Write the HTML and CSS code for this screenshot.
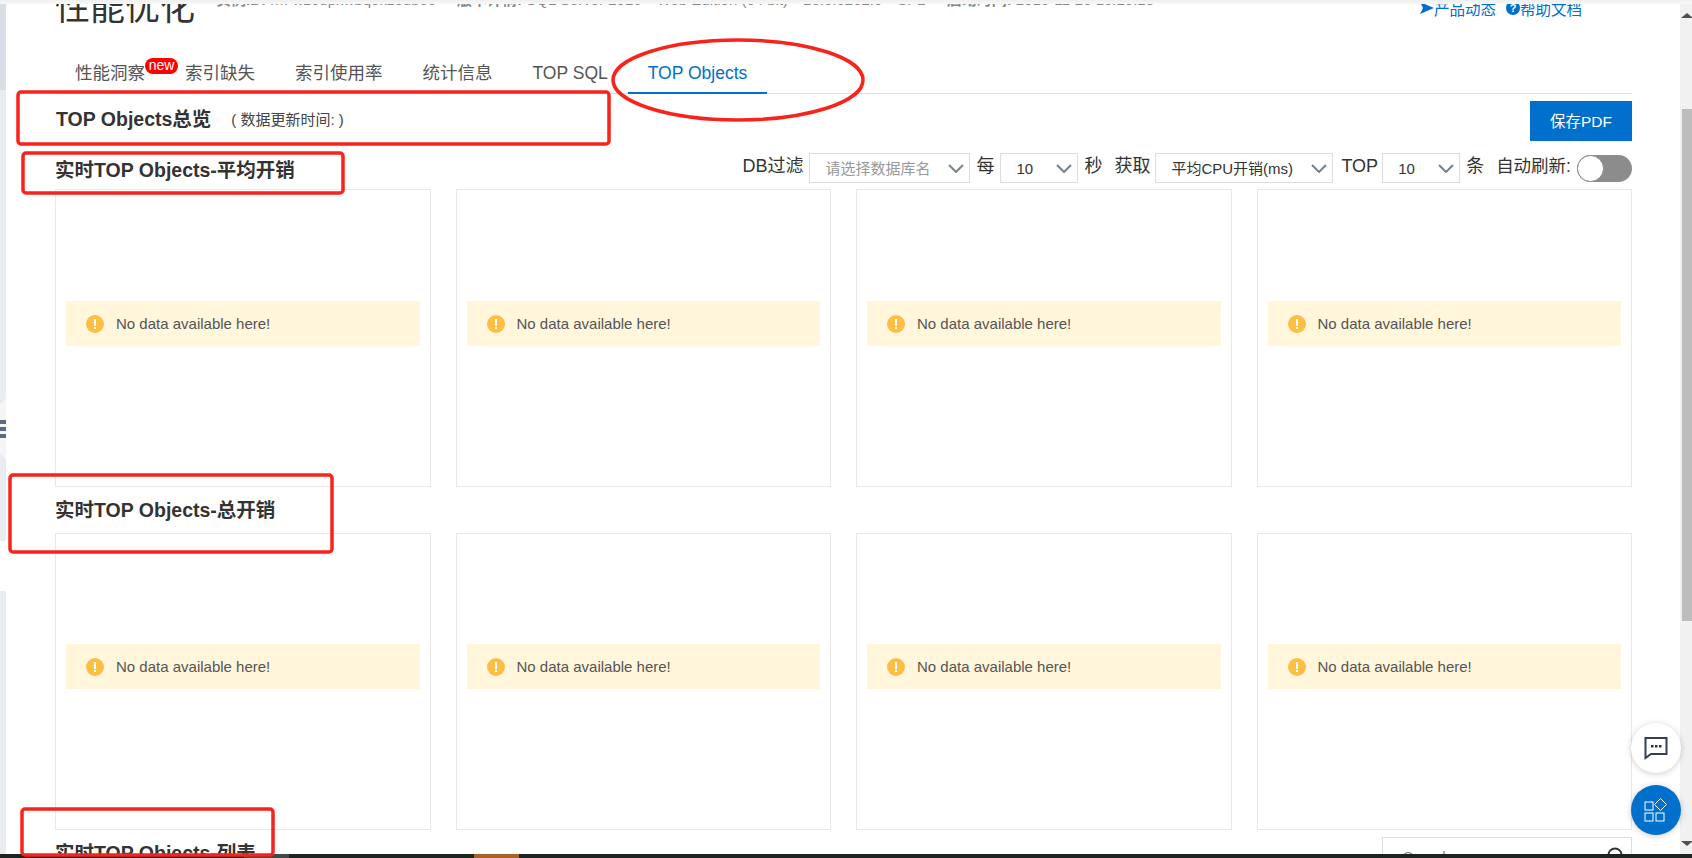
FILE: index.html
```html
<!DOCTYPE html>
<html lang="zh-CN">
<head>
  <meta charset="UTF-8" />
  <title>性能优化 - TOP Objects</title>
  <link rel="stylesheet" href="styles.css">
</head>
<body>
  <div class="screen">
    <div class="top-fade"></div>

    <div class="workspace">
      <!-- Sidebar edge -->
      <div class="side-strip">
        <div class="strip-dark"></div>
        <div class="strip-light"></div>
        <div class="strip-gap"></div>
        <div class="strip-light strip-rest"></div>
        <div class="collapse">
          <span></span><span></span><span></span>
        </div>
      </div>

      <div class="main">
        <div class="page-head">
          <h1>性能优化</h1>
          <div class="meta">
            <span class="meta-item"><b>实例ID:</b> rm-wz6dpxwbq0kz3db00</span>
            <span class="meta-item meta-wide"><b>版本详情:</b> SQL Server 2016</span>
            <span class="meta-item">Web Edition (64 bit)</span>
            <span class="meta-item">13.0.6202.0</span>
            <span class="meta-item">SP2</span>
            <span class="meta-item meta-wide"><b>启动时间:</b> 2019-11-20 10:20:18</span>
          </div>
          <div class="head-links">
            <a class="head-link">
              <svg width="14" height="14" viewBox="0 0 14 14"><path d="M0 1l14 6-14 6 3-6z" fill="#0070cc"/></svg>产品动态
            </a>
            <a class="head-link">
              <svg width="14" height="14" viewBox="0 0 14 14"><circle cx="7" cy="7" r="7" fill="#0070cc"/><text x="7" y="11" class="help-mark">?</text></svg>帮助文档
            </a>
          </div>
        </div>

        <!-- Tabs -->
        <div class="tabs">
          <div class="tab">性能洞察<span class="badge">new</span></div>
          <div class="tab">索引缺失</div>
          <div class="tab">索引使用率</div>
          <div class="tab">统计信息</div>
          <div class="tab">TOP SQL</div>
          <div class="tab active">TOP Objects</div>
        </div>

        <div class="overview">
          <div class="overview-title">
            <h2>TOP Objects总览</h2>
            <span class="update-time">( 数据更新时间: )</span>
          </div>
          <button class="save-btn">保存PDF</button>
        </div>

        <!-- Average cost -->
        <div class="filter-row">
          <h2 class="filter-title">实时TOP Objects-平均开销</h2>
          <div class="filters">
            <span class="lbl">DB过滤</span>
            <div class="select w-db ml6"><span class="placeholder">请选择数据库名</span><svg class="chev" width="16" height="9" viewBox="0 0 16 9"><path d="M1 1l7 7 7-7" fill="none" stroke="#76828f" stroke-width="2"/></svg></div>
            <span class="lbl ml6">每</span>
            <div class="select w-num ml6"><span>10</span><svg class="chev" width="16" height="9" viewBox="0 0 16 9"><path d="M1 1l7 7 7-7" fill="none" stroke="#76828f" stroke-width="2"/></svg></div>
            <span class="lbl ml6">秒</span>
            <span class="lbl ml12">获取</span>
            <div class="select w-metric ml5"><span>平均CPU开销(ms)</span><svg class="chev" width="16" height="9" viewBox="0 0 16 9"><path d="M1 1l7 7 7-7" fill="none" stroke="#76828f" stroke-width="2"/></svg></div>
            <span class="lbl ml8">TOP</span>
            <div class="select w-num ml4"><span>10</span><svg class="chev" width="16" height="9" viewBox="0 0 16 9"><path d="M1 1l7 7 7-7" fill="none" stroke="#76828f" stroke-width="2"/></svg></div>
            <span class="lbl ml6">条</span>
            <span class="lbl lbl-auto ml12">自动刷新:</span>
            <div class="toggle ml6"><span class="knob"></span></div>
          </div>
        </div>

        <div class="chart-grid chart-grid-first">
          <div class="chart-card"><div class="alert"><svg class="warn" width="18" height="18" viewBox="0 0 18 18"><circle cx="9" cy="9" r="9" fill="#fcbf45"/><rect x="8" y="4" width="2" height="7" fill="#fff"/><rect x="8" y="12" width="2" height="2" fill="#fff"/></svg>No data available here!</div></div>
          <div class="chart-card"><div class="alert"><svg class="warn" width="18" height="18" viewBox="0 0 18 18"><circle cx="9" cy="9" r="9" fill="#fcbf45"/><rect x="8" y="4" width="2" height="7" fill="#fff"/><rect x="8" y="12" width="2" height="2" fill="#fff"/></svg>No data available here!</div></div>
          <div class="chart-card"><div class="alert"><svg class="warn" width="18" height="18" viewBox="0 0 18 18"><circle cx="9" cy="9" r="9" fill="#fcbf45"/><rect x="8" y="4" width="2" height="7" fill="#fff"/><rect x="8" y="12" width="2" height="2" fill="#fff"/></svg>No data available here!</div></div>
          <div class="chart-card"><div class="alert"><svg class="warn" width="18" height="18" viewBox="0 0 18 18"><circle cx="9" cy="9" r="9" fill="#fcbf45"/><rect x="8" y="4" width="2" height="7" fill="#fff"/><rect x="8" y="12" width="2" height="2" fill="#fff"/></svg>No data available here!</div></div>
        </div>

        <!-- Total cost -->
        <div class="section-row">
          <h2>实时TOP Objects-总开销</h2>
        </div>

        <div class="chart-grid">
          <div class="chart-card"><div class="alert"><svg class="warn" width="18" height="18" viewBox="0 0 18 18"><circle cx="9" cy="9" r="9" fill="#fcbf45"/><rect x="8" y="4" width="2" height="7" fill="#fff"/><rect x="8" y="12" width="2" height="2" fill="#fff"/></svg>No data available here!</div></div>
          <div class="chart-card"><div class="alert"><svg class="warn" width="18" height="18" viewBox="0 0 18 18"><circle cx="9" cy="9" r="9" fill="#fcbf45"/><rect x="8" y="4" width="2" height="7" fill="#fff"/><rect x="8" y="12" width="2" height="2" fill="#fff"/></svg>No data available here!</div></div>
          <div class="chart-card"><div class="alert"><svg class="warn" width="18" height="18" viewBox="0 0 18 18"><circle cx="9" cy="9" r="9" fill="#fcbf45"/><rect x="8" y="4" width="2" height="7" fill="#fff"/><rect x="8" y="12" width="2" height="2" fill="#fff"/></svg>No data available here!</div></div>
          <div class="chart-card"><div class="alert"><svg class="warn" width="18" height="18" viewBox="0 0 18 18"><circle cx="9" cy="9" r="9" fill="#fcbf45"/><rect x="8" y="4" width="2" height="7" fill="#fff"/><rect x="8" y="12" width="2" height="2" fill="#fff"/></svg>No data available here!</div></div>
        </div>

        <!-- List -->
        <div class="section-row">
          <h2>实时TOP Objects-列表</h2>
          <div class="search">
            <span>Search</span>
            <svg width="18" height="18" viewBox="0 0 18 18"><circle cx="8" cy="8" r="6.5" fill="none" stroke="#333" stroke-width="2"/><path d="M13 13l4 4" stroke="#333" stroke-width="2"/></svg>
          </div>
        </div>
      </div>

      <div class="scrollbar">
        <span class="arrow-up"></span>
        <div class="thumb"></div>
        <span class="arrow-down"></span>
      </div>
    </div>

    <div class="taskbar">
      <span class="task-item"></span>
      <span class="task-item task-orange"></span>
    </div>

    <!-- Floating buttons -->
    <div class="float-btn chat-btn">
      <svg width="24" height="24" viewBox="0 0 24 24"><path d="M1.5 2h21v16H7l-5.500 4z" fill="none" stroke="#333f50" stroke-width="2"/><rect x="7" y="9" width="2.500" height="2.500" fill="#333"/><rect x="11" y="9" width="2.500" height="2.500" fill="#333"/><rect x="15" y="9" width="2.500" height="2.500" fill="#333"/></svg>
    </div>
    <div class="float-btn apps-btn">
      <svg width="24" height="24" viewBox="0 0 24 24"><rect x="1" y="4" width="8" height="8" fill="none" stroke="#fff"/><rect x="1" y="15" width="8" height="8" fill="none" stroke="#fff"/><rect x="12" y="15" width="8" height="8" fill="none" stroke="#fff"/><path d="M16.500 0.500l6 6-6 6-6-6z" fill="none" stroke="#fff"/></svg>
    </div>

    <!-- Red marks drawn on the screenshot -->
    <svg class="marks" width="1692" height="858" viewBox="0 0 1692 858">
      <rect x="18" y="92" width="591" height="52" rx="3"/>
      <rect x="23" y="153" width="320" height="40" rx="3"/>
      <rect x="10" y="475" width="322" height="77" rx="3"/>
      <rect x="22" y="809" width="251" height="46" rx="3"/>
      <ellipse cx="738" cy="80" rx="125" ry="40"/>
    </svg>
  </div>
</body>
</html>
```

FILE: styles.css
```css
* {
  box-sizing: border-box;
}

body {
  margin: 0;
  font-family: "Liberation Sans", "Noto Sans CJK SC", sans-serif;
  color: #333;
  background: #fff;
}

h1, h2 {
  margin: 0;
}

.screen {
  position: relative;
  display: flex;
  flex-direction: column;
  width: 1692px;
  height: 858px;
  overflow: hidden;
}

.top-fade {
  height: 4px;
  background: linear-gradient(#efefef, #f8f8f8);
}

.workspace {
  display: flex;
  flex: 1;
  min-height: 0;
}

/* sidebar edge */
.side-strip {
  position: relative;
  display: flex;
  flex-direction: column;
  width: 6px;
}

.strip-dark {
  height: 86px;
  background: #d9dde5;
}

.strip-light {
  height: 451px;
  background: #e9ecf1;
}

.strip-gap {
  height: 50px;
}

.strip-rest {
  flex: 1;
}

.collapse {
  position: absolute;
  top: 394px;
  left: 0;
  width: 6px;
  height: 62px;
  padding-top: 22px;
  background: #f5f5f7;
  clip-path: polygon(0 10%, 100% 0, 100% 100%, 0 90%);
}

.collapse span {
  display: block;
  height: 4px;
  margin-bottom: 3px;
  background: #5d6b80;
}

/* main column */
.main {
  flex: 1;
  min-width: 0;
  padding: 0 48px 0 49px;
  overflow: hidden;
}

.page-head {
  display: flex;
  height: 48px;
  margin-top: -20px;
}

.page-head h1 {
  font-size: 35px;
  font-weight: 400;
  line-height: 48px;
  color: #333;
}

.meta {
  display: flex;
  gap: 15px;
  margin-left: 21px;
  font-size: 15px;
  line-height: 32px;
  color: #888;
  white-space: nowrap;
}

.meta-wide {
  margin-left: 6px;
}

.head-links {
  display: flex;
  gap: 10px;
  margin-left: auto;
  margin-right: 50px;
}

.head-link {
  display: flex;
  align-items: center;
  font-size: 15.5px;
  color: #0070cc;
}

.help-mark {
  font-size: 11px;
  font-weight: bold;
  text-anchor: middle;
  fill: #fff;
}

/* tabs */
.tabs {
  display: flex;
  margin-top: 20px;
  border-bottom: 1px solid #e0e0e0;
}

.tab {
  position: relative;
  height: 42px;
  margin-bottom: -1px;
  padding: 0 20px;
  font-size: 17.5px;
  line-height: 42px;
  color: #555;
  border-bottom: 2px solid transparent;
}

.tab.active {
  color: #0070cc;
  border-bottom-color: #0070cc;
}

.badge {
  position: absolute;
  top: 6px;
  left: 90px;
  width: 33px;
  height: 16px;
  font-size: 14px;
  line-height: 15px;
  text-align: center;
  color: #fff;
  background: #f00;
  border-radius: 8px;
}

/* overview row */
.overview {
  display: flex;
  align-items: center;
  justify-content: space-between;
  margin-top: 7px;
  padding-left: 1px;
}

.overview-title {
  display: flex;
  align-items: center;
  margin-bottom: 5px;
}

.overview h2,
.filter-title,
.section-row h2 {
  font-size: 19.5px;
  color: #333;
}

.overview h2 {
  margin-bottom: 2px;
}

.update-time {
  margin-left: 20px;
  font-size: 15px;
  color: #444;
}

.save-btn {
  width: 102px;
  height: 40px;
  padding: 0 0 2px;
  font-family: inherit;
  font-size: 15.5px;
  color: #fff;
  background: #0070cc;
  border: none;
}

/* filter row */
.filter-row {
  display: flex;
  justify-content: space-between;
  margin-top: 12px;
  margin-bottom: 6px;
}

.filter-title {
  margin-top: 4px;
  line-height: 26px;
}

.filters {
  display: flex;
  align-items: flex-start;
}

.lbl {
  font-size: 18px;
  line-height: 26px;
  color: #333;
}

.lbl-auto {
  font-size: 17.5px;
}

.ml4 { margin-left: 4px; }
.ml5 { margin-left: 5px; }
.ml6 { margin-left: 6px; }
.ml8 { margin-left: 8px; }
.ml12 { margin-left: 12px; }

.select {
  position: relative;
  height: 30px;
  padding-left: 15px;
  font-size: 15px;
  line-height: 30px;
  color: #333;
  background: #fff;
  border: 1px solid #ddd;
}

.w-db { width: 161px; }
.w-num { width: 78px; }
.w-metric { width: 178px; }

.placeholder {
  color: #999;
}

.chev {
  position: absolute;
  top: 10px;
  right: 5px;
}

.toggle {
  display: flex;
  align-items: center;
  width: 55px;
  height: 27px;
  margin-top: 2px;
  background: #8c8c8c;
  border-radius: 14px;
}

.knob {
  width: 27px;
  height: 27px;
  background: #fff;
  border: 1px solid #8c8c8c;
  border-radius: 50%;
}

/* chart cards */
.chart-grid {
  display: grid;
  grid-template-columns: repeat(4, 1fr);
  gap: 25px;
}

.chart-card {
  height: 297px;
  padding: 110px 10px 0;
  border: 1px solid #e8e8e8;
}

.chart-grid-first .chart-card {
  height: 298px;
  padding-top: 111px;
}

.alert {
  display: flex;
  align-items: center;
  height: 45px;
  padding-left: 20px;
  font-size: 15px;
  color: #555;
  background: #fff6db;
}

.warn {
  margin-right: 12px;
}

.section-row {
  display: flex;
  align-items: flex-start;
  justify-content: space-between;
  height: 46px;
}

.section-row h2 {
  line-height: 46px;
}

.search {
  display: flex;
  align-items: center;
  justify-content: space-between;
  width: 250px;
  height: 38px;
  margin-top: 7px;
  padding: 0 6px 0 20px;
  font-size: 15px;
  color: #888;
  border: 1px solid #ddd;
}

/* scrollbar */
.scrollbar {
  position: relative;
  width: 12px;
  background: #f1f1f1;
}

.thumb {
  position: absolute;
  top: 105px;
  left: 2px;
  width: 10px;
  height: 512px;
  background: #bdbdbd;
}

.arrow-up,
.arrow-down {
  position: absolute;
  right: -1px;
  border-left: 6px solid transparent;
  border-right: 6px solid transparent;
}

.arrow-up {
  top: 9px;
  border-bottom: 5px solid #505050;
}

.arrow-down {
  bottom: 8px;
  border-top: 5px solid #505050;
}

/* taskbar */
.taskbar {
  display: flex;
  height: 4px;
  background: #1b2420;
}

.task-item {
  width: 45px;
  margin-left: 244px;
  background: #3f4a47;
}

.task-orange {
  margin-left: 185px;
  background: #a5632a;
}

/* floating */
.float-btn {
  position: absolute;
  left: 1631px;
  display: flex;
  align-items: center;
  justify-content: center;
  width: 50px;
  height: 50px;
  border-radius: 50%;
  box-shadow: 0 1px 6px rgba(0,0,0,0.2);
}

.chat-btn {
  top: 723px;
  background: #fff;
}

.apps-btn {
  top: 785px;
  background: #0070cc;
}

.marks {
  position: absolute;
  top: 0;
  left: 0;
  pointer-events: none;
}

.marks rect,
.marks ellipse {
  fill: none;
  stroke: #f8231a;
  stroke-width: 3.5;
}
```
